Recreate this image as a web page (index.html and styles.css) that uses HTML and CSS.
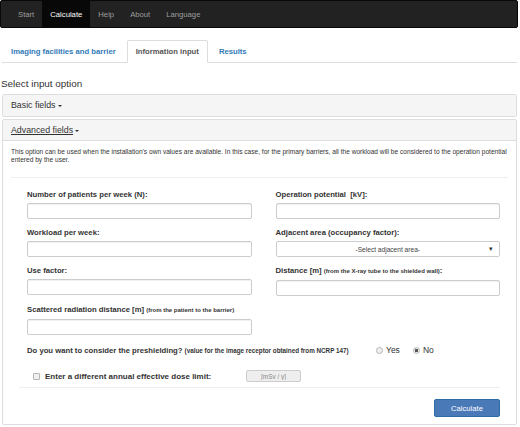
FILE: index.html
```html
<!DOCTYPE html>
<html lang="en">
<head>
    <meta charset="UTF-8">
    <meta name="viewport" content="width=device-width, initial-scale=1.0">
    <title>Shielding Calculation</title>
    <link rel="stylesheet" href="styles.css">
</head>
<body>
    <nav class="navbar">
        <ul class="nav-menu">
            <li><a href="#">Start</a></li>
            <li class="active"><a href="#">Calculate</a></li>
            <li><a href="#">Help</a></li>
            <li><a href="#">About</a></li>
            <li><a href="#">Language</a></li>
        </ul>
    </nav>

    <div class="page">
        <ul class="tabs">
            <li><a href="#">Imaging facilities and barrier</a></li>
            <li class="active"><a href="#">Information input</a></li>
            <li><a href="#">Results</a></li>
        </ul>

        <h4 class="section-title">Select input option</h4>

        <div class="panel">
            <div class="panel-heading">Basic fields<span class="caret"></span></div>
        </div>

        <div class="panel">
            <div class="panel-heading open"><a href="#">Advanced fields</a><span class="caret"></span></div>
            <div class="panel-body">
                <p class="hint">This option can be used when the installation's own values are available. In this case, for the primary barriers, all the workload will be considered to the operation potential entered by the user.</p>
                <hr>
                <div class="form-area">
                    <div class="form-grid">
                        <div class="form-group">
                            <label>Number of patients per week (N):</label>
                            <input type="text" class="form-control">
                        </div>
                        <div class="form-group">
                            <label>Operation potential &nbsp;[kV]:</label>
                            <input type="text" class="form-control">
                        </div>
                        <div class="form-group">
                            <label>Workload per week:</label>
                            <input type="text" class="form-control">
                        </div>
                        <div class="form-group">
                            <label>Adjacent area (occupancy factor):</label>
                            <div class="select">
                                <span>-Select adjacent area-</span>
                                <span class="select-arrow">&#9662;</span>
                            </div>
                        </div>
                        <div class="form-group">
                            <label>Use factor:</label>
                            <input type="text" class="form-control">
                        </div>
                        <div class="form-group">
                            <label>Distance [m] <small>(from the X-ray tube to the shielded wall)</small>:</label>
                            <input type="text" class="form-control">
                        </div>
                        <div class="form-group">
                            <label>Scattered radiation distance [m] <small>(from the patient to the barrier)</small></label>
                            <input type="text" class="form-control">
                        </div>
                    </div>

                    <div class="question-row">
                        <label>Do you want to consider the preshielding? <small>(value for the image receptor obtained from NCRP 147)</small></label>
                        <div class="radios">
                            <label class="radio"><input type="radio" name="preshield"> Yes</label>
                            <label class="radio"><input type="radio" name="preshield" checked> No</label>
                        </div>
                    </div>

                    <div class="limit-row">
                        <label class="check"><input type="checkbox"> Enter a different annual effective dose limit:</label>
                        <input type="text" class="limit-input" placeholder="[mSv / y]" disabled>
                    </div>
                </div>

                <div class="actions">
                    <button>Calculate</button>
                </div>
            </div>
        </div>
    </div>
</body>
</html>
```

FILE: styles.css
```css
* {
    box-sizing: border-box;
}
body {
    margin: 0;
    font-family: "Liberation Sans", Arial, sans-serif;
    font-size: 7.7px;
    color: #333;
    background: #fff;
}
a {
    color: #337ab7;
    text-decoration: none;
}

/* top bar */
.navbar {
    width: 518px;
    height: 28px;
    background-color: #222;
    border: 1px solid #080808;
    border-radius: 2px;
    padding-left: 9px;
}
.nav-menu {
    list-style: none;
    margin: 0;
    padding: 0;
    display: flex;
    height: 100%;
}
.nav-menu a {
    display: block;
    height: 100%;
    line-height: 27px;
    padding: 0 8px;
    color: #9d9d9d;
}
.nav-menu .active a {
    background-color: #080808;
    color: #fff;
}

.page {
    padding: 0 2px;
}

/* tabs */
.tabs {
    list-style: none;
    margin: 12px 1px 0 0;
    padding: 0;
    display: flex;
    border-bottom: 1px solid #ddd;
}
.tabs li {
    margin-right: 2px;
    margin-bottom: -1px;
}
.tabs a {
    display: block;
    padding: 0 8px;
    height: 23px;
    line-height: 22px;
    font-weight: bold;
    border: 1px solid transparent;
    border-radius: 2px 2px 0 0;
}
.tabs .active a {
    color: #555;
    background: #fff;
    border-color: #ddd #ddd transparent;
}

.section-title {
    margin: 15px 0 4px -1px;
    font-size: 9.9px;
    font-weight: normal;
    line-height: 12px;
}

/* collapsible panels */
.panel {
    border: 1px solid #ddd;
    border-radius: 2px;
    margin-bottom: 2px;
    background: #fff;
    width: 515px;
}
.panel-heading {
    background-color: #f5f5f5;
    height: 21px;
    line-height: 21px;
    padding: 0 8px;
    font-size: 8.8px;
    color: #333;
}
.panel-heading.open {
    border-bottom: 1px solid #ddd;
}
.panel-heading a {
    color: #333;
    text-decoration: underline;
}
.caret {
    display: inline-block;
    width: 0;
    height: 0;
    margin-left: 2px;
    vertical-align: middle;
    border-top: 2.2px solid #333;
    border-left: 2.2px solid transparent;
    border-right: 2.2px solid transparent;
}
.panel-body {
    padding: 7px 8px;
}
.hint {
    margin: 0;
    font-size: 6.6px;
    line-height: 8px;
}
hr {
    margin: 13px 0 11px 0;
    border: 0;
    border-top: 1px solid #eee;
}

/* form */
.form-area {
    margin: 0 8px 0 16px;
}
.form-grid {
    display: grid;
    grid-template-columns: 1fr 1fr;
    column-gap: 24px;
}
.form-group {
    margin-bottom: 8px;
}
.form-group label,
.question-row > label {
    display: block;
    font-weight: bold;
    line-height: 11px;
    margin-bottom: 3px;
}
label small {
    font-size: 6px;
}
.form-control {
    display: block;
    width: 100%;
    height: 16px;
    border: 1px solid #ccc;
    border-radius: 2px;
    box-shadow: inset 0 1px 1px rgba(0, 0, 0, 0.06);
    font: inherit;
}
.select {
    display: flex;
    align-items: center;
    justify-content: center;
    position: relative;
    height: 16px;
    border: 1px solid #ccc;
    border-radius: 2px;
    font-size: 6.6px;
    color: #444;
}
.select-arrow {
    position: absolute;
    right: 6px;
    font-size: 7px;
    color: #333;
}

.question-row {
    display: flex;
    align-items: center;
    margin-top: 1px;
    height: 12px;
}
.question-row > label {
    margin-bottom: 0;
    width: 349px;
}
.question-row small {
    font-size: 6.3px;
}
.radios {
    display: flex;
    gap: 13px;
}
.radio {
    display: flex;
    align-items: center;
    gap: 3px;
    color: #333;
    font-size: 8.5px;
}
input[type="radio"],
input[type="checkbox"] {
    appearance: none;
    margin: 0;
    width: 7px;
    height: 7px;
    border: 1px solid #b5b5b5;
    background: #f0f0f0;
}
input[type="radio"] {
    border-radius: 50%;
}
input[type="checkbox"] {
    border-radius: 1px;
}
input[type="radio"]:checked {
    background: radial-gradient(circle, #555 0 1.4px, #f0f0f0 1.8px);
}

.limit-row {
    display: flex;
    align-items: center;
    margin-top: 14px;
    height: 12px;
    padding-left: 6px;
}
.check {
    display: flex;
    align-items: center;
    gap: 5px;
    font-weight: bold;
    font-size: 8px;
    width: 213px;
}
.limit-input {
    width: 55px;
    height: 12px;
    border: 1px solid #ccc;
    border-radius: 2px;
    background: #eee;
    font: inherit;
    font-size: 6.4px;
    text-align: center;
}
.limit-input::placeholder {
    color: #888;
}

.actions {
    display: flex;
    justify-content: flex-end;
    border-top: 1px solid #eee;
    margin: 5px 8px 0 8px;
    padding-top: 11px;
}
button {
    width: 66px;
    height: 18px;
    background-color: #4a79b8;
    border: 1px solid #2e6da4;
    border-radius: 2px;
    color: #fff;
    font: inherit;
    cursor: pointer;
}
```
